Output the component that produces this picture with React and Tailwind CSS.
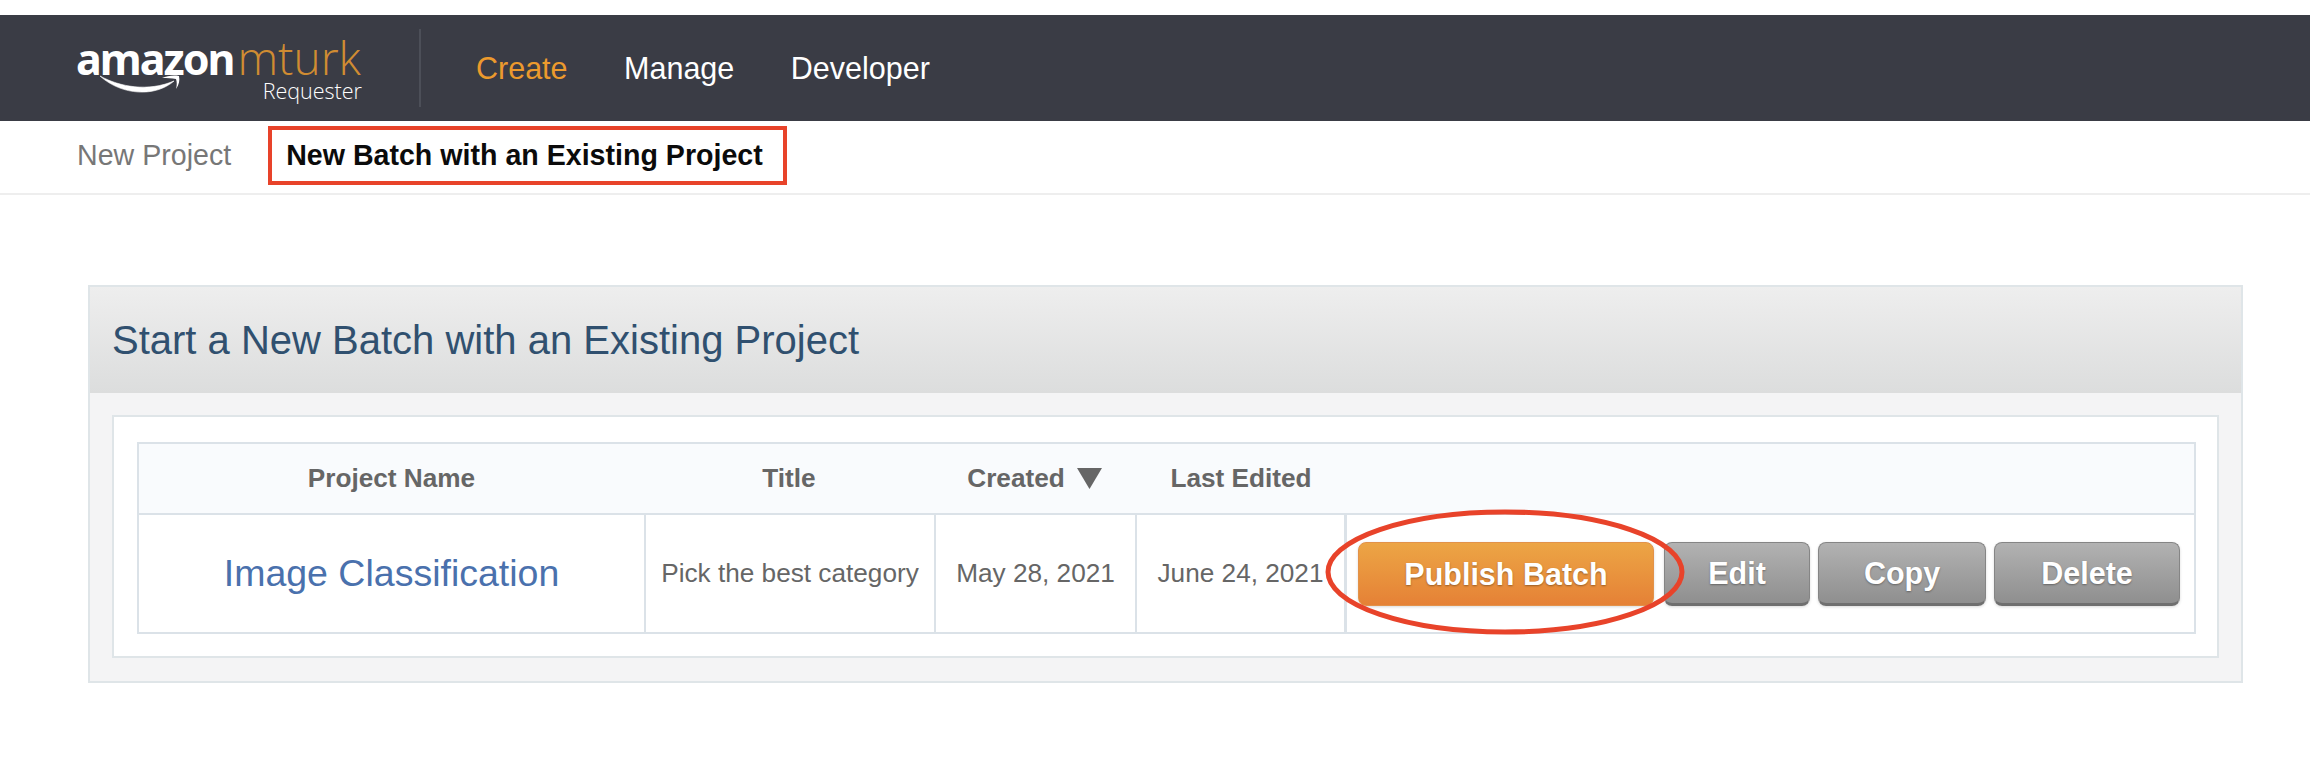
import React from 'react';

const NAV = [
  { label: 'Create', color: 'text-[#ec9a2d]' },
  { label: 'Manage', color: 'text-white' },
  { label: 'Developer', color: 'text-white' },
];

const COLUMNS = 'grid grid-cols-[505px_290px_201px_209px_1fr]';

function Logo() {
  return (
    <div className="relative w-[286px] h-[78px] shrink-0">
      <div className="flex items-baseline h-[57px]">
        <span className="font-['Noto_Sans'] font-bold text-[43px] leading-[57px] tracking-[-2px] text-white">amazon</span>
        <span className="ml-[4px] font-['Open_Sans'] font-light text-[46px] leading-[57px] text-[#d08c32]">mturk</span>
      </div>
      {/* smile + arrow */}
      <svg className="absolute left-[24px] top-[46px]" width="84" height="20" viewBox="0 0 84 20" fill="none">
        <path d="M0 1 C 20 12, 48 17, 74 6 C 56 22, 22 21, 0 1 Z" fill="#fff" stroke="#fff" strokeWidth="0.6" />
        <path d="M62 3 C 67 1, 73 0, 79 1 C 80 5, 79 10, 76 14 C 77 10, 77 7, 76 4 C 72 3, 67 3, 62 3 Z" fill="#fff" />
      </svg>
      <div className="absolute right-[0px] top-[48px] font-['Open_Sans'] font-light text-[21.5px] leading-[28px] text-white">Requester</div>
    </div>
  );
}

function ActionButton({ children, width, orange }) {
  const look = orange
    ? 'bg-gradient-to-b from-[#eca545] to-[#e58136] border-[#e2924a] pt-[2px]'
    : 'bg-gradient-to-b from-[#b2b2b2] to-[#8f8f8f] border-[#858585] border-b-[#6f6f6f] border-b-[3px] pt-[3px]';
  return (
    <button
      className={`${look} ${width} h-[64px] border rounded-[8px] text-white font-bold text-[30.5px] [text-shadow:0_1px_2px_rgba(0,0,0,0.35)] shadow-[0_1px_3px_rgba(0,0,0,0.15)]`}
    >
      {children}
    </button>
  );
}

export default function App() {
  return (
    <div className="pt-[15px] h-[759px] overflow-hidden bg-white font-['Liberation_Sans',Arial,sans-serif]">
      {/* top bar */}
      <header className="h-[106px] bg-[#3a3c45] flex items-center pl-[76px]">
        <Logo />
        <div className="w-[2px] h-[78px] bg-[#4c4f58] ml-[57px]" />
        <nav className="flex ml-[55px] gap-[56.5px] text-[30.5px] pt-[2px]">
          {NAV.map(n => (
            <a key={n.label} className={n.color}>{n.label}</a>
          ))}
        </nav>
      </header>

      {/* sub nav */}
      <div className="h-[74px] border-b-2 border-[#eeeeee] flex items-center pl-[77px] pb-[4px] text-[28.6px]">
        <span className="text-[#777777]">New Project</span>
        <span className="ml-[37px] w-[519px] h-[59px] border-4 border-[#e8432a] flex items-center pl-[14px] font-bold text-[#0b0b0b]">
          New Batch with an Existing Project
        </span>
      </div>

      {/* panel */}
      <section className="mt-[90px] mx-[88px] w-[2155px] h-[398px] border-2 border-[#dfe5e8] bg-[#f4f4f5]">
        <div className="h-[106px] bg-gradient-to-b from-[#eeeeee] to-[#dcdddd] flex items-center pl-[22px]">
          <h1 className="text-[40px] text-[#30506f]">Start a New Batch with an Existing Project</h1>
        </div>
        <div className="mt-[22px] ml-[22px] w-[2107px] h-[243px] border-2 border-[#dfe5e8] bg-white pt-[25px] pl-[23px]">
          <div className="relative w-[2059px] h-[192px] border-2 border-[#dbe2e8]">
            {/* header row */}
            <div className={`${COLUMNS} h-[71px] bg-[#f9fbfd] border-b-2 border-[#dbe2e8] items-center text-center text-[26.2px] font-bold text-[#666666]`}>
              <div>Project Name</div>
              <div>Title</div>
              <div className="flex items-center justify-center gap-[12px]">
                <span>Created</span>
                <svg width="25" height="21" viewBox="0 0 25 21"><path d="M0 0 H25 L12.5 21 Z" fill="#666666" /></svg>
              </div>
              <div className="pl-[3px]">Last Edited</div>
              <div />
            </div>
            {/* project row */}
            <div className={`${COLUMNS} h-[117px] items-stretch text-[26.2px] text-[#666666]`}>
              <div className="flex items-center justify-center text-[37.5px] text-[#4a71ad]">Image Classification</div>
              <div className="flex items-center justify-center border-l-2 border-[#dbe2e8]">Pick the best category</div>
              <div className="flex items-center justify-center border-l-2 border-[#dbe2e8]">May 28, 2021</div>
              <div className="flex items-center justify-center border-l-2 border-[#dbe2e8] whitespace-nowrap">June 24, 2021</div>
              <div className="flex items-center pl-[11px] border-l-[3px] border-[#dbe2e8]">
                <ActionButton width="w-[296px]" orange>Publish Batch</ActionButton>
                <div className="ml-[10px]"><ActionButton width="w-[146px]">Edit</ActionButton></div>
                <div className="ml-[8px]"><ActionButton width="w-[168px]">Copy</ActionButton></div>
                <div className="ml-[8px]"><ActionButton width="w-[186px]">Delete</ActionButton></div>
              </div>
            </div>
            {/* annotation ellipse over the publish button */}
            <svg className="absolute left-[1186px] top-[65px]" width="360" height="126" viewBox="0 0 360 126" fill="none">
              <ellipse cx="180" cy="63" rx="177" ry="60" stroke="#e8432a" strokeWidth="5" />
            </svg>
          </div>
        </div>
      </section>
    </div>
  );
}
